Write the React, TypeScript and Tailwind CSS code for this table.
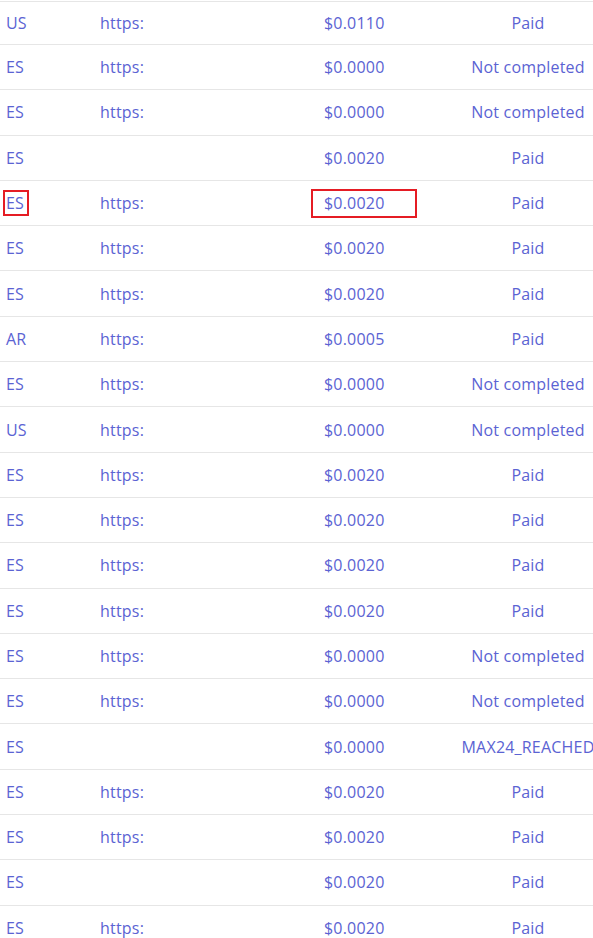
type Row = {
  country: string;
  url: string;
  price: string;
  status: string;
  highlight?: boolean;
};

const rows: Row[] = [
  { country: "US", url: "https:", price: "$0.0110", status: "Paid" },
  { country: "ES", url: "https:", price: "$0.0000", status: "Not completed" },
  { country: "ES", url: "https:", price: "$0.0000", status: "Not completed" },
  { country: "ES", url: "", price: "$0.0020", status: "Paid" },
  { country: "ES", url: "https:", price: "$0.0020", status: "Paid", highlight: true },
  { country: "ES", url: "https:", price: "$0.0020", status: "Paid" },
  { country: "ES", url: "https:", price: "$0.0020", status: "Paid" },
  { country: "AR", url: "https:", price: "$0.0005", status: "Paid" },
  { country: "ES", url: "https:", price: "$0.0000", status: "Not completed" },
  { country: "US", url: "https:", price: "$0.0000", status: "Not completed" },
  { country: "ES", url: "https:", price: "$0.0020", status: "Paid" },
  { country: "ES", url: "https:", price: "$0.0020", status: "Paid" },
  { country: "ES", url: "https:", price: "$0.0020", status: "Paid" },
  { country: "ES", url: "https:", price: "$0.0020", status: "Paid" },
  { country: "ES", url: "https:", price: "$0.0000", status: "Not completed" },
  { country: "ES", url: "https:", price: "$0.0000", status: "Not completed" },
  { country: "ES", url: "", price: "$0.0000", status: "MAX24_REACHED" },
  { country: "ES", url: "https:", price: "$0.0020", status: "Paid" },
  { country: "ES", url: "https:", price: "$0.0020", status: "Paid" },
  { country: "ES", url: "", price: "$0.0020", status: "Paid" },
  { country: "ES", url: "https:", price: "$0.0020", status: "Paid" },
];

export default function App() {
  return (
    <div className="h-[938px] w-[593px] overflow-hidden bg-white font-['Open_Sans',sans-serif] text-[16px] tracking-[0.2px] text-[#5b63d3]">
      <div className="h-[2px] border-b border-[#e6e6e6]" />
      <div className="w-[639px]">
        {rows.map((row, index) => (
          <div
            key={index}
            className={`grid grid-cols-[100px_211px_106px_222px] items-center border-b border-[#e6e6e6] ${
              index === 0 ? "h-[43px]" : "h-[45.3px]"
            }`}
          >
            <div className="pl-[3px]">
              <div
                className={`flex h-[26px] w-[26px] items-center border-2 pl-px leading-none ${
                  row.highlight ? "border-[#e51c24]" : "border-transparent"
                }`}
              >
                {row.country}
              </div>
            </div>
            <div>{row.url}</div>
            <div
              className={`flex h-[29px] items-center border-2 pl-[11px] ${
                row.highlight ? "border-[#e51c24]" : "border-transparent"
              }`}
            >
              {row.price}
            </div>
            <div className="text-center whitespace-nowrap">{row.status}</div>
          </div>
        ))}
      </div>
    </div>
  );
}
